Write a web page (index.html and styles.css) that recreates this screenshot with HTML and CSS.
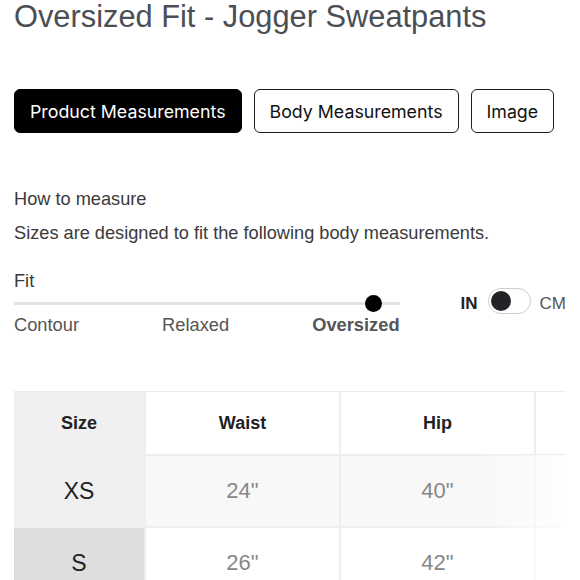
FILE: index.html
```html
<!DOCTYPE html>
<html lang="en">
<head>
<meta charset="utf-8">
<title>Size Guide</title>
<link rel="stylesheet" href="styles.css">
</head>
<body>
<div class="page">
  <h1 class="title">Oversized Fit - Jogger Sweatpants</h1>

  <div class="tabs">
    <button class="tab active">Product Measurements</button>
    <button class="tab">Body Measurements</button>
    <button class="tab">Image</button>
  </div>

  <p class="how">How to measure</p>
  <p class="desc">Sizes are designed to fit the following body measurements.</p>

  <div class="fit-row">
    <div class="fit">
      <div class="fit-label">Fit</div>
      <div class="track"><span class="thumb"></span></div>
      <div class="fit-options">
        <span>Contour</span>
        <span>Relaxed</span>
        <span class="selected">Oversized</span>
      </div>
    </div>
    <div class="units">
      <span class="unit-on">IN</span>
      <span class="switch"><span class="knob"></span></span>
      <span class="unit-off">CM</span>
    </div>
  </div>

  <div class="table-wrap">
    <table class="sizes">
      <thead>
        <tr>
          <th class="size-col">Size</th>
          <th>Waist</th>
          <th>Hip</th>
          <th></th>
        </tr>
      </thead>
      <tbody>
        <tr class="row-alt">
          <td class="size-col">XS</td>
          <td>24"</td>
          <td>40"</td>
          <td></td>
        </tr>
        <tr>
          <td class="size-col active-size">S</td>
          <td>26"</td>
          <td>42"</td>
          <td></td>
        </tr>
      </tbody>
    </table>
    <div class="fade"></div>
  </div>
</div>
</body>
</html>
```

FILE: styles.css
```css
html, body {
  margin: 0;
  padding: 0;
  background: #ffffff;
}

body {
  font-family: "Liberation Sans", Arial, sans-serif;
  color: #333333;
}

.page {
  padding: 0 14px;
}

.title {
  margin: 0;
  font-size: 30.8px;
  line-height: 34px;
  font-weight: 400;
  color: #4b4f55;
}

.tabs {
  display: flex;
  gap: 12px;
  margin-top: 55px;
}

.tab {
  height: 44px;
  padding: 0 15px;
  border: 1.5px solid #1e1e1e;
  border-radius: 6px;
  background: #ffffff;
  color: #111111;
  font-family: Inter, "Liberation Sans", sans-serif;
  font-size: 17.8px;
  cursor: pointer;
}

.tab.active {
  background: #000000;
  border-color: #000000;
  color: #ffffff;
}

.how {
  margin: 56px 0 0;
  font-size: 18.2px;
  line-height: 21px;
  color: #3a3a3a;
}

.desc {
  margin: 13px 0 0;
  font-size: 18.2px;
  line-height: 21px;
  color: #3a3a3a;
}

.fit-row {
  display: flex;
  align-items: flex-start;
  margin-top: 27px;
}

.fit {
  width: 386px;
}

.fit-label {
  font-size: 18.2px;
  line-height: 21px;
  color: #3a3a3a;
}

.track {
  position: relative;
  height: 3px;
  margin-top: 10px;
  background: #e2e2e2;
}

.thumb {
  position: absolute;
  left: 351px;
  top: -7px;
  width: 17px;
  height: 17px;
  border-radius: 50%;
  background: #000000;
}

.fit-options {
  display: flex;
  justify-content: space-between;
  margin-top: 9px;
  font-size: 18.3px;
  line-height: 21px;
  color: #555555;
}

.fit-options .selected {
  font-weight: 700;
}

.units {
  display: flex;
  align-items: center;
  margin-left: 61px;
  margin-top: 17px;
  font-size: 17px;
}

.unit-on {
  font-weight: 700;
  color: #222222;
}

.switch {
  position: relative;
  width: 41px;
  height: 24px;
  margin: 0 9px 6px 10px;
  border: 1px solid #cfcfcf;
  border-radius: 13px;
  background: #ffffff;
}

.knob {
  position: absolute;
  left: 2px;
  top: 2px;
  width: 20px;
  height: 20px;
  border-radius: 50%;
  background: #222326;
}

.unit-off {
  color: #555555;
}

.table-wrap {
  position: relative;
  margin-top: 56px;
  width: 552px;
  overflow: hidden;
}

.sizes {
  border-collapse: collapse;
  table-layout: fixed;
  width: 710px;
  border-top: 1px solid #ececec;
}

.sizes th,
.sizes td {
  border: 2px solid #eeeeee;
  border-top: none;
  text-align: center;
  padding: 0;
}

.sizes tr > :first-child {
  border-left: none;
}

.sizes th {
  height: 62px;
  font-size: 18px;
  font-weight: 700;
  color: #222222;
  background: #ffffff;
  width: 193px;
}

.sizes th.size-col {
  width: 130px;
}

.sizes td {
  height: 70px;
  font-size: 22px;
  color: #888888;
  background: #ffffff;
}

.sizes .row-alt td {
  background: #f8f8f8;
}

.sizes .size-col {
  background: #f0f0f0;
  color: #222222;
}

.sizes td.size-col {
  background: #f0f0f0;
  font-size: 23px;
}

.sizes td.active-size {
  background: #dedede;
}

.fade {
  position: absolute;
  top: 64px;
  right: 0;
  bottom: 0;
  width: 90px;
  background: linear-gradient(to right, rgba(255,255,255,0), rgba(255,255,255,0.85));
  pointer-events: none;
}
```
